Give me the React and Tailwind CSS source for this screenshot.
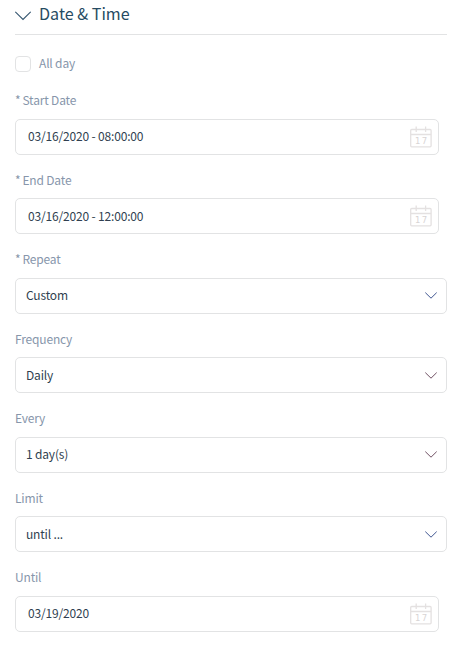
const fields = [
  { label: "Start Date", required: true, value: "03/16/2020 - 08:00:00", type: "date" },
  { label: "End Date", required: true, value: "03/16/2020 - 12:00:00", type: "date" },
  { label: "Repeat", required: true, value: "Custom", type: "select", stroke: "#3f5590" },
  { label: "Frequency", value: "Daily", type: "select", stroke: "#6e4f62" },
  { label: "Every", value: "1 day(s)", type: "select", stroke: "#6e4f62" },
  { label: "Limit", value: "until ...", type: "select", stroke: "#3f5590" },
  { label: "Until", value: "03/19/2020", type: "date" },
];

function CalendarIcon() {
  return (
    <svg width="22" height="22" viewBox="0 0 22 22" fill="none" stroke="#e4e1e1" strokeWidth="1.3">
      <rect x="0.7" y="3.5" width="20.4" height="17.3" rx="1" />
      <path d="M0.7 8.5H21.1M6.2 0.5V6M15.6 0.5V6" />
      <text x="5" y="18" fontSize="8.5" fill="#d8d5d5" stroke="none" letterSpacing="1.4" fontFamily="DejaVu Sans, sans-serif">
        17
      </text>
    </svg>
  );
}

function Field({ label, required, value, type, stroke }) {
  const isDate = type === "date";
  return (
    <div className="h-[79.5px]">
      <div className="h-[27.5px] text-[12px] leading-[18px] tracking-[-0.17px] text-[#8796ab]">
        {required && <span className="mr-[2px]">*</span>}
        {label}
      </div>
      <div
        className={
          isDate
            ? "flex h-9 w-[424px] items-center justify-between rounded-[5px] border border-[#e2e3e4] pl-3 pr-[6px]"
            : "flex h-9 w-[432px] items-center justify-between rounded-[5px] border border-[#e2e3e4] pl-[10px] pr-[9px]"
        }
      >
        <span className="pb-px text-[12px] leading-[18px] tracking-[-0.17px] text-[#303f50]">{value}</span>
        {isDate ? (
          <CalendarIcon />
        ) : (
          <svg width="12" height="7" viewBox="0 0 12 7" fill="none" stroke={stroke} strokeWidth="1">
            <path d="M0.3 0.6L6 6.2L11.7 0.6" />
          </svg>
        )}
      </div>
    </div>
  );
}

export default function App() {
  return (
    <div className="h-[647px] w-[462px] overflow-hidden bg-white px-[15px] font-['Noto_Sans_CJK_SC',sans-serif]">
      <div className="flex h-[35px] w-[432px] items-start border-b border-[#e2e3e4]">
        <svg className="mt-[11px]" width="16" height="10" viewBox="0 0 16 10" fill="none" stroke="#30526c" strokeWidth="1.1">
          <path d="M0.3 0.8L8 8.5L15.7 0.8" />
        </svg>
        <h2 className="ml-2 mt-px text-[16.1px] leading-6 text-[#264b62]">Date &amp; Time</h2>
      </div>
      <div className="mt-5 flex h-[18px] items-center">
        <span className="h-4 w-4 rounded-[4px] border border-[#e2e3e4]" />
        <span className="ml-2 pb-0.5 text-[12px] leading-[18px] tracking-[-0.17px] text-[#8796ab]">All day</span>
      </div>
      <div className="mt-[18.4px]">
        {fields.map((field) => (
          <Field key={field.label} {...field} />
        ))}
      </div>
    </div>
  );
}
